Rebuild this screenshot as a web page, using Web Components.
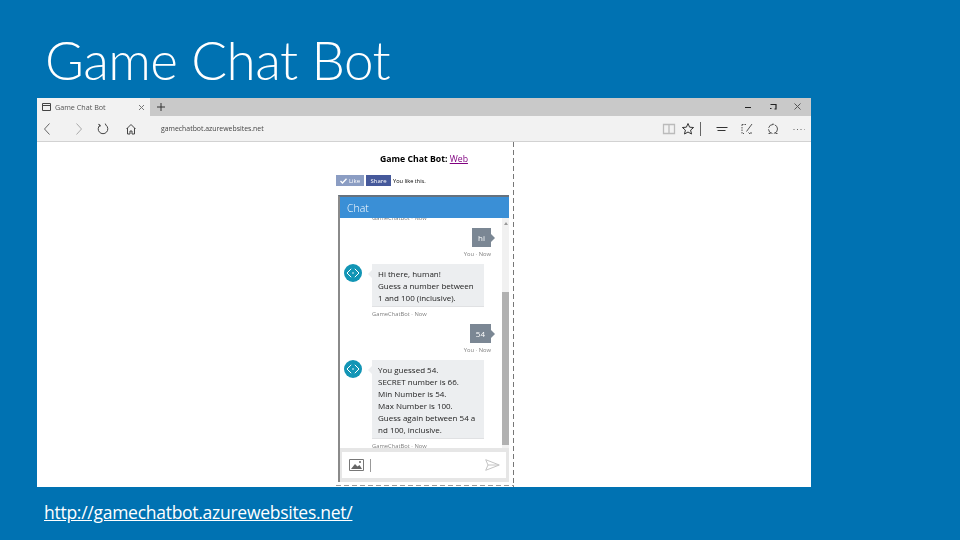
<!DOCTYPE html>
<html lang="en">
<head>
<meta charset="utf-8">
<title>Game Chat Bot</title>
<style>
html,body{margin:0;padding:0;}
body{width:960px;height:540px;overflow:hidden;background:#0072b2;font-family:"Open Sans","Liberation Sans",sans-serif;}
</style>
</head>
<body>
<slide-deck>
    <span slot="title">Game Chat Bot</span>
    <browser-window slot="shot">
        <bot-page>
            <chat-panel>
                <chat-label class="cut">GameChatBot · Now</chat-label>
                <chat-msg from="user">hi</chat-msg>
                <chat-label align="right">You · Now</chat-label>
                <chat-msg from="bot">Hi there, human!<br>Guess a number between<br>1 and 100 (inclusive).</chat-msg>
                <chat-label>GameChatBot · Now</chat-label>
                <chat-msg from="user">54</chat-msg>
                <chat-label align="right">You · Now</chat-label>
                <chat-msg from="bot">You guessed 54.<br>SECRET number is 66.<br>Min Number is 54.<br>Max Number is 100.<br>Guess again between 54 a<br>nd 100, inclusive.</chat-msg>
                <chat-label>GameChatBot · Now</chat-label>
            </chat-panel>
        </bot-page>
    </browser-window>
    <span slot="link">http://gamechatbot.azurewebsites.net/</span>
</slide-deck>

<script>
class SlideDeck extends HTMLElement{
    constructor(){
        super();
        this.attachShadow({mode:"open"});
        this.shadowRoot.innerHTML = `
        <style>
        :host{display:flex;flex-direction:column;width:960px;height:540px;color:#fff;}
        #title{height:98px;box-sizing:border-box;padding:24px 0 0 45px;font-family:Lato,"Open Sans",sans-serif;font-size:53px;letter-spacing:-.55px;font-weight:300;line-height:72px;white-space:nowrap;}
        #shot{padding-left:37px;height:389px;}
        #link{padding:13px 0 0 44px;font-size:17.5px;letter-spacing:-.27px;line-height:24px;text-decoration:underline;white-space:nowrap;}
        </style>
        <div id="title"><slot name="title"></slot></div>
        <div id="shot"><slot name="shot"></slot></div>
        <div id="link"><slot name="link"></slot></div>`;
    }
}
customElements.define("slide-deck",SlideDeck);

class BrowserWindow extends HTMLElement{
    constructor(){
        super();
        this.attachShadow({mode:"open"});
        this.shadowRoot.innerHTML = `
        <style>
        :host{display:flex;flex-direction:column;width:774px;height:389px;background:#fff;color:#333;overflow:hidden;filter:blur(.35px);}
        svg{display:block;fill:none;stroke:#444;stroke-width:1;}
        #tabs{display:flex;align-items:center;height:18px;background:#c9c9c9;flex:none;}
        #tab{display:flex;align-items:center;width:113px;height:18px;background:#f2f2f2;box-sizing:border-box;padding-left:5px;font-size:7.2px;color:#555;}
        #tab span{margin-left:4px;flex:1;}
        #plus{margin-left:3px;}
        #winbtns{display:flex;margin-left:auto;gap:9px;padding-right:5px;}
        #bar{display:flex;align-items:center;height:26px;background:#f2f2f2;flex:none;box-sizing:border-box;padding:0 4px 0 2px;border-bottom:1px solid #d2d2d2;}
        #url{margin-left:22px;font-size:6.9px;color:#444;}
        #right{display:flex;align-items:center;margin-left:auto;}
        #sep{width:1px;height:14px;background:#666;margin:0 13px 0 4px;}
        #content{flex:1;min-height:0;}
        </style>
        <div id="tabs">
            <div id="tab">
                <svg width="9" height="8" viewBox="0 0 9 8"><path d="M.5.5h8v7h-8zM.5 2.500h8"/></svg>
                <span>Game Chat Bot</span>
                <svg width="7" height="7" viewBox="0 0 7 7" style="margin-right:5px;stroke:#777"><path d="M1 1l5 5M6 1L1 6"/></svg>
            </div>
            <svg id="plus" width="16" height="16" viewBox="0 0 16 16" style="stroke:#333"><path d="M8 4v8M4 8h8"/></svg>
            <div id="winbtns">
                <svg width="16" height="16" viewBox="0 0 16 16" style="stroke:#222"><path d="M5 8.500h6"/></svg>
                <svg width="16" height="16" viewBox="0 0 16 16" style="stroke:#222;stroke-width:1.200"><path d="M5.500 5.500h5.500v4.500h-1.500M5 9.500h1.500"/></svg>
                <svg width="16" height="16" viewBox="0 0 16 16" style="stroke:#555"><path d="M4.500 4.500l6 6M10.500 4.500l-6 6"/></svg>
            </div>
        </div>
        <div id="bar">
            <svg width="16" height="16" viewBox="0 0 16 16" style="stroke:#666"><path d="M10.500 2.500l-5 5.500 5 5.500"/></svg>
            <svg width="16" height="16" viewBox="0 0 16 16" style="margin-left:16px;stroke:#aaa"><path d="M5.500 2.500l5 5.500-5 5.500"/></svg>
            <svg width="16" height="16" viewBox="0 0 16 16" style="margin-left:8px"><path d="M10.800 4a4.800 4.800 0 1 1-5.600 0M3.300 3.300l1.900.7-.5 2M10.300 2.600l.5 1.400"/></svg>
            <svg width="16" height="16" viewBox="0 0 16 16" style="margin-left:12px"><path d="M3.500 8l4.500-4.500 4.500 4.500M4.500 7v6h2.500v-3h2v3h2.500v-6"/></svg>
            <div id="url">gamechatbot.azurewebsites.net</div>
            <div id="right">
                <svg width="16" height="16" viewBox="0 0 16 16" style="stroke:#bbb;stroke-width:1.300"><path d="M2.500 3.500h5.500v9h-5.500zM8 3.500h5.500v9h-5.500z"/></svg>
                <svg width="16" height="16" viewBox="0 0 16 16" style="margin-left:3px;stroke:#333"><path d="M8 2.500l1.600 3.700 4 .3-3 2.600.9 3.900L8 11l-3.500 2 .9-3.900-3-2.600 4-.3z"/></svg>
                <div id="sep"></div>
                <svg width="16" height="16" viewBox="0 0 16 16" style="stroke:#333"><path d="M2.500 6.500h11M3.500 9.500h8"/></svg>
                <svg width="16" height="16" viewBox="0 0 16 16" style="margin-left:9px;stroke:#555"><path d="M3 3.500h5M3 3.500v9h2" stroke-dasharray="1.500 1"/><path d="M13 3L7.500 10.500M9.500 11.500l1.500 1.500M12 11v2"/></svg>
                <svg width="16" height="16" viewBox="0 0 16 16" style="margin-left:10px;stroke:#555"><circle cx="8" cy="8" r="4.500" stroke-dasharray="6 1.500"/><path d="M3.500 12.500h2M10.500 12.500h2M8 2.500v1.500"/></svg>
                <svg width="16" height="16" viewBox="0 0 16 16" style="margin-left:10px;stroke:#666;stroke-dasharray:1 2.500"><path d="M2.500 8.500h11"/></svg>
            </div>
        </div>
        <div id="content"><slot></slot></div>`;
    }
}
customElements.define("browser-window",BrowserWindow);

class BotPage extends HTMLElement{
    constructor(){
        super();
        this.attachShadow({mode:"open"});
        this.shadowRoot.innerHTML = `
        <style>
        :host{display:block;width:178px;height:345px;margin-left:299px;color:#000;
            background:
                repeating-linear-gradient(to bottom,#777 0 5px,transparent 5px 8px) right top/1px 100% no-repeat,
                repeating-linear-gradient(to right,#999 0 5px,transparent 5px 8px) left bottom 1px/100% 1px no-repeat;}
        h1{margin:0;height:33px;box-sizing:border-box;padding-top:11px;font-size:8.7px;line-height:12px;font-weight:700;text-align:center;padding-right:2px;}
        h1 a{color:#800080;font-weight:400;}
        #likes{display:flex;align-items:center;height:11px;gap:2px;font-size:5.6px;}
        .btn{display:flex;align-items:center;justify-content:center;height:11px;color:#fff;gap:2px;font-size:6px;}
        #like{width:28px;background:#8b9dc3;}
        #share{width:25px;background:#46599b;}
        #chat{margin:9px 0 0 2px;}
        </style>
        <h1>Game Chat Bot: <a href="#">Web</a></h1>
        <div id="likes">
            <div class="btn" id="like">
                <svg width="7" height="6" viewBox="0 0 7 6" fill="none" stroke="#fff" stroke-width="1.300"><path d="M.5 3l2 2L6.500.7"/></svg>Like
            </div>
            <div class="btn" id="share">Share</div>
            <span>You like this.</span>
        </div>
        <div id="chat"><slot></slot></div>`;
    }
}
customElements.define("bot-page",BotPage);

class ChatPanel extends HTMLElement{
    constructor(){
        super();
        this.attachShadow({mode:"open"});
        this.shadowRoot.innerHTML = `
        <style>
        :host{display:flex;flex-direction:column;width:171px;height:287px;box-sizing:border-box;border-top:2px solid #66727e;border-left:2px solid #8a8a8a;background:#fff;}
        #head{height:21px;flex:none;background:#3a8fd6;color:#fff;font-size:10.5px;font-weight:300;line-height:23px;padding-left:7px;overflow:hidden;}
        #body{display:flex;flex:1;min-height:0;}
        #msgs{flex:1;min-width:0;overflow:hidden;}
        #track{width:7px;flex:none;display:flex;flex-direction:column;background:#f1f1f1;}
        #track i{display:block;}
        #gap{height:74px;}
        #gap:before{content:"";display:block;width:0;margin:4px auto 0;border:2.500px solid transparent;border-top:0;border-bottom:3px solid #999;}
        #thumb{height:153px;background:#b1b1b1;}
        #input{flex:none;height:34px;box-sizing:border-box;background:#e6e6e6;padding:4px 3px 4px 2px;}
        #box{display:flex;align-items:center;height:26px;background:#fff;box-sizing:border-box;padding:0 6px 0 7px;}
        #caret{width:1px;height:13px;background:#999;margin-left:6px;}
        #send{margin-left:auto;}
        </style>
        <div id="head">Chat</div>
        <div id="body">
            <div id="msgs"><slot></slot></div>
            <div id="track"><i id="gap"></i><i id="thumb"></i></div>
        </div>
        <div id="input">
            <div id="box">
                <svg width="15" height="12" viewBox="0 0 15 12" fill="none"><path d="M.5.5h14v11H.5z" stroke="#777"/><path d="M2 10l4-5 2.500 2.500 2-1.500L13 10z" fill="#666"/><circle cx="11" cy="3" r="1" fill="#666"/></svg>
                <div id="caret"></div>
                <svg id="send" width="15" height="12" viewBox="0 0 15 12" fill="none" stroke="#c4c4c4"><path d="M.7.7L14.300 6 .7 11.300 3 6zM3 6h11"/></svg>
            </div>
        </div>`;
    }
}
customElements.define("chat-panel",ChatPanel);

class ChatMsg extends HTMLElement{
    static get observedAttributes(){
        return ['from'];
    }
    constructor(){
        super();
        this.attachShadow({mode:"open"});
    }
    connectedCallback(){
        let bot = this.getAttribute("from") == "bot";
        let st = `
        <style>
        :host{display:flex;font-size:8px;line-height:12px;}
        :host([from=user]){justify-content:flex-end;padding-right:11px;}
        :host([from=bot]){padding-left:4px;gap:10px;color:#222;}
        #user{position:relative;height:19px;min-width:7px;padding:0 6px;line-height:19px;background:#7b8794;color:#fff;}
        #user:after{content:"";position:absolute;left:100%;top:6px;border:4px solid transparent;border-left-color:#7b8794;border-right:0;}
        #bot{width:100px;padding:4px 6px 2px;background:#eceef0;border-bottom:1px solid #e0e1e3;position:relative;white-space:nowrap;}
        #bot:before{content:"";position:absolute;right:100%;top:6px;border:4px solid transparent;border-right-color:#eceef0;border-left:0;}
        svg{display:block;flex:none;}
        </style>`;
        if(bot){
            this.shadowRoot.innerHTML = st + `
            <svg width="18" height="18" viewBox="0 0 18 18"><circle cx="9" cy="9" r="9" fill="#1295b5"/><path d="M7.200 4.800L3 9l4.200 4.200M10.800 4.800L15 9l-4.200 4.200" fill="none" stroke="#fff" stroke-width="1"/><circle cx="9" cy="9" r=".8" fill="#fff"/></svg>
            <div id="bot"><slot></slot></div>`;
        }else{
            this.shadowRoot.innerHTML = st + `<div id="user"><slot></slot></div>`;
        }
    }
}
customElements.define("chat-msg",ChatMsg);

class ChatLabel extends HTMLElement{
    constructor(){
        super();
        this.attachShadow({mode:"open"});
        this.shadowRoot.innerHTML = `
        <style>
        :host{display:block;height:17px;box-sizing:border-box;padding:3px 0 0 32px;font-size:5.8px;line-height:9px;color:#808080;white-space:nowrap;}
        :host([align=right]){text-align:right;padding:3px 11px 0 0;}
        :host(.cut){margin-top:-7px;}
        </style>
        <slot></slot>`;
    }
}
customElements.define("chat-label",ChatLabel);
</script>
</body>
</html>
